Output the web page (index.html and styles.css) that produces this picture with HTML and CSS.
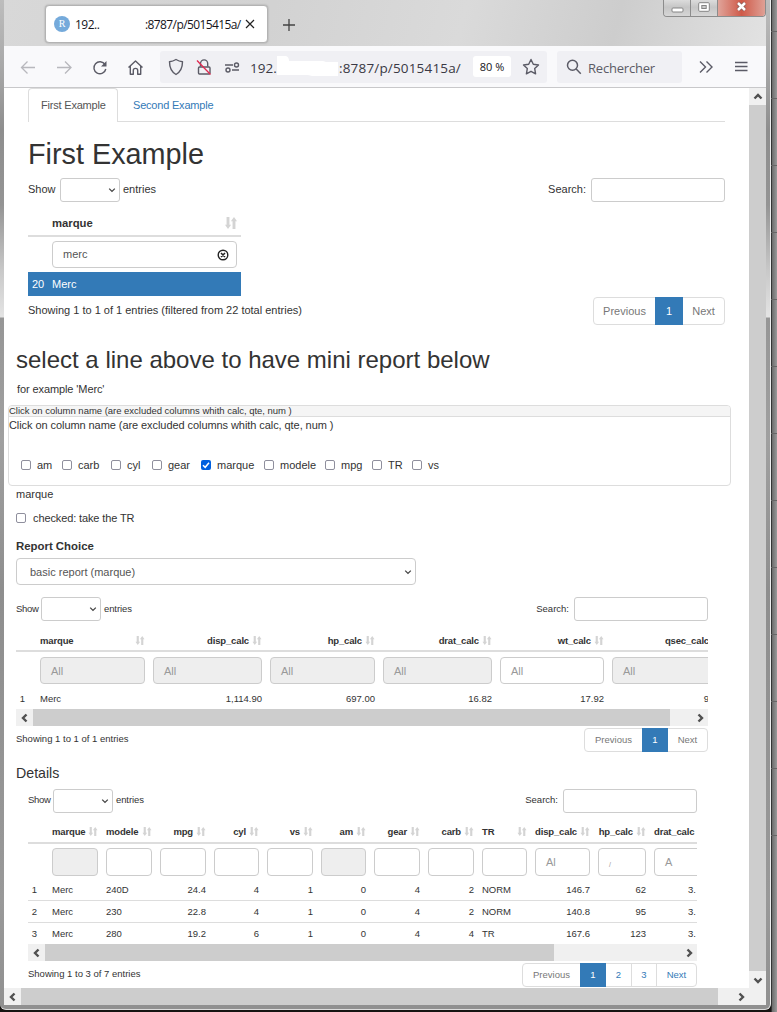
FILE: index.html
```html
<!DOCTYPE html>
<html lang="en">
<head>
<meta charset="utf-8">
<title>First Example</title>
<link rel="stylesheet" href="styles.css">
</head>
<body>
<svg class="defs" width="0" height="0">
  <symbol id="sort" viewBox="0 0 10 10"><path d="M1.300 0h2.400v6.500H5.100L2.500 10 0 6.500h1.300zM6.300 10h2.400V3.500H10L7.500 0 4.900 3.500h1.400z" fill="#d4d4d4"/></symbol>
  <symbol id="chev" viewBox="0 0 8 8"><path d="M1.2 2.6 4 5.4l2.8-2.8" fill="none" stroke="#444" stroke-width="1.3"/></symbol>
  <symbol id="left" viewBox="0 0 10 10"><path d="M6.500 1.500 3 5l3.500 3.500" fill="none" stroke="#505050" stroke-width="2.4"/></symbol>
  <symbol id="right" viewBox="0 0 10 10"><path d="M3.500 1.500 7 5 3.500 8.500" fill="none" stroke="#505050" stroke-width="2.4"/></symbol>
</svg>
<div class="desktop">
<div class="frame">
<div class="window">
  <div class="titlebar">
    <div class="browser-tab">
      <span class="favicon">R</span>
      <span class="tab-ip">192..</span>
      <span class="tab-url">:8787/p/5015415a/</span>
      <svg width="10" height="10" viewBox="0 0 10 10"><path d="m1 1 8 8M9 1 1 9" stroke="#222" stroke-width="1.2"/></svg>
    </div>
    <svg class="plus" width="12" height="12" viewBox="0 0 12 12"><path d="M6 0v12M0 6h12" stroke="#444" stroke-width="1.3"/></svg>
    <div class="controls">
      <span class="ctl"><svg width="13" height="6" viewBox="0 0 13 6"><rect x="1" y="1" width="11" height="4" rx="1" fill="#fff" stroke="#858585"/></svg></span>
      <span class="ctl mid"><svg width="12" height="10" viewBox="0 0 12 10"><rect x=".7" y=".7" width="10.6" height="8.6" rx="1" fill="#fff" stroke="#858585"/><rect x="3.8" y="3.5" width="4.4" height="3" fill="#ccc" stroke="#858585"/></svg></span>
      <span class="ctl close"><svg width="13" height="11" viewBox="0 0 13 11"><path d="m3 2 7 7m0-7L3 9" stroke="#8d5e5b" stroke-width="4.2"/><path d="m3 2 7 7m0-7L3 9" stroke="#fff" stroke-width="2.5"/></svg></span>
    </div>
  </div>
  <div class="toolbar">
    <svg class="nav" width="150" height="40" viewBox="4 47 150 40" fill="none" stroke="#5b5b66" stroke-width="1.4">
      <path d="M35 67.500H21.500m6-6-6 6 6 6M57 67.500h14m-6-6 6 6-6 6" stroke="#b8b8bd" stroke-width="1.300"/>
      <path d="M105 64.500a6 6 0 1 0 .8 4.500"/><path d="M106.500 61v5.500H101z" fill="#5b5b66" stroke="none"/>
      <path d="m128.500 67.500 7-6.500 7 6.500M130.300 66v8.300h3V70.500c0-2.800 4.400-2.800 4.400 0v3.800h3V66" stroke-linejoin="round"/>
    </svg>
    <div class="address">
      <svg class="shields" width="90" height="32" viewBox="160 51 90 32" fill="none" stroke="#5b5b66" stroke-width="1.400">
        <path d="M176 59.500c2.500 1.500 4.500 2 6.500 2.200 0 6-1.800 10-6.500 12.800-4.700-2.800-6.500-6.800-6.500-12.800 2-.2 4-.7 6.500-2.200z" stroke-linejoin="round"/>
        <rect x="198.500" y="67" width="11.500" height="7" rx="1"/><path d="M200.500 66.500v-3a3.600 3.600 0 0 1 7.200 0v3"/>
        <path d="m197 60.500 13.500 14" stroke="#e22850" stroke-width="1.300"/>
        <path d="M225 65h8M232 70h7"/><circle cx="236.500" cy="65" r="2"/><circle cx="228" cy="70" r="2"/>
      </svg>
      <span class="ip">192.</span>
      <svg class="smudge" width="62" height="24" viewBox="277 55 62 24"><path d="M277 56h9q3 1 3 5h34l3 1h12v14h-26l-4-1h-31z" fill="#fff"/></svg>
      <span class="url">:8787/p/5015415a/</span>
      <span class="zoom">80 %</span>
      <svg class="star" width="18" height="18" viewBox="0 0 18 18"><path d="m9 1.500 2.300 4.800 5.200.7-3.800 3.600.9 5.200L9 13.300l-4.600 2.500.9-5.200L1.500 7l5.200-.7z" fill="none" stroke="#5b5b66" stroke-width="1.400" stroke-linejoin="round"/></svg>
    </div>
    <div class="searchbox">
      <svg width="16" height="16" viewBox="0 0 16 16" fill="none" stroke="#5b5b66" stroke-width="1.500"><circle cx="6.500" cy="6.200" r="5"/><path d="m10.200 9.900 4.600 4.800"/></svg>
      <span class="rech">Rechercher</span>
    </div>
    <svg class="more" width="14" height="14" viewBox="0 0 14 14" fill="none" stroke="#5b5b66" stroke-width="1.400"><path d="m1 1.500 5.500 5.500L1 12.500M7.500 1.500 13 7l-5.500 5.500"/></svg>
    <svg class="burger" width="13" height="11" viewBox="0 0 13 11" stroke="#5b5b66" stroke-width="1.400"><path d="M0 1.500h12.500M0 5.500h12.500M0 9.500h12.500"/></svg>
  </div>
  <div class="viewport">
    <main class="page">
      <nav class="tabs"><span class="tab active"><span class="t-first">First Example</span></span><span class="tab link"><span class="t-second">Second Example</span></span></nav>
      <h1 class="title"><span>First Example</span></h1>
      <div class="controls-row first">
        <span class="show">Show</span><span class="select"><svg width="8" height="8"><use href="#chev"/></svg></span><span class="entries">entries</span>
        <span class="search-label">Search:</span><span class="search"></span>
      </div>
      <div class="grid t0">
        <div class="head"><span></span><span class="th text"><b>marque</b><svg width="12" height="12" viewBox="0 0 10 10"><use href="#sort"/></svg></span></div>
        <div class="filters"><span></span><span class="inp"><span class="val">merc</span><svg class="clear" width="12" height="12" viewBox="0 0 12 12" fill="none" stroke="#222"><circle cx="6" cy="6" r="4.800" stroke-width="1.400"/><path d="m4 4 4 4m0-4L4 8" stroke-width="1.500"/></svg></span></div>
        <div class="row selected"><span class="n">20</span><span class="l">Merc</span></div>
      </div>
      <div class="foot f0"><span class="info"><span class="i0">Showing 1 to 1 of 1 entries (filtered from 22 total entries)</span></span>
        <span class="pager"><span class="p prev">Previous</span><span class="p on">1</span><span class="p next">Next</span></span></div>
      <h2 class="subtitle"><span>select a line above to have mini report below</span></h2>
      <p class="example">for example 'Merc'</p>
      <section class="panel">
        <div class="panel-head"><span>Click on column name (are excluded columns whith calc, qte, num )</span></div>
        <div class="panel-text"><span>Click on column name (are excluded columns whith calc, qte, num )</span></div>
        <div class="checks">
          <label class="c1"><i class="box"></i>am</label><label class="c2"><i class="box"></i>carb</label><label class="c3"><i class="box"></i>cyl</label><label class="c4"><i class="box"></i>gear</label><label class="c5"><i class="box checked"><svg width="10" height="10" viewBox="0 0 10 10"><path d="m2 5.200 2.200 2.100L8 2.800" fill="none" stroke="#fff" stroke-width="1.500"/></svg></i>marque</label><label class="c6"><i class="box"></i>modele</label><label class="c7"><i class="box"></i>mpg</label><label class="c8"><i class="box"></i>TR</label><label><i class="box"></i>vs</label>
        </div>
      </section>
      <p class="chosen">marque</p>
      <label class="take"><i class="box"></i><span>checked: take the TR</span></label>
      <p class="report-label">Report Choice</p>
      <div class="report-select"><span>basic report (marque)</span><svg width="8" height="8"><use href="#chev"/></svg></div>
      <section class="small report">
        <div class="controls-row">
          <span class="show">Show</span><span class="select"><svg width="8" height="8"><use href="#chev"/></svg></span><span class="entries">entries</span>
          <span class="search-label">Search:</span><span class="search"></span>
        </div>
        <div class="grid t1">
          <div class="head"><span></span><span class="th text"><b>marque</b><svg width="10" height="9"><use href="#sort"/></svg></span><span class="th"><b>disp_calc</b><svg width="10" height="9"><use href="#sort"/></svg></span><span class="th"><b>hp_calc</b><svg width="10" height="9"><use href="#sort"/></svg></span><span class="th"><b>drat_calc</b><svg width="10" height="9"><use href="#sort"/></svg></span><span class="th"><b>wt_calc</b><svg width="10" height="9"><use href="#sort"/></svg></span><span class="th last"><b>qsec_calc</b></span></div>
          <div class="filters"><span></span><span class="inp off">All</span><span class="inp off">All</span><span class="inp off">All</span><span class="inp off">All</span><span class="inp">All</span><span class="inp off">All</span></div>
          <div class="row"><span class="n">1</span><span class="l">Merc</span><span>1,114.90</span><span>697.00</span><span>16.82</span><span>17.92</span><span class="cut">9</span></div>
        </div>
        <div class="hbar"><span class="arrow"><svg width="10" height="10"><use href="#left"/></svg></span><span class="thumb"></span><span class="arrow"><svg width="10" height="10"><use href="#right"/></svg></span></div>
        <div class="foot"><span class="info">Showing 1 to 1 of 1 entries</span>
          <span class="pager"><span class="p prev">Previous</span><span class="p on">1</span><span class="p next">Next</span></span></div>
      </section>
      <h3 class="details-title">Details</h3>
      <section class="small details">
        <div class="controls-row">
          <span class="show">Show</span><span class="select"><svg width="8" height="8"><use href="#chev"/></svg></span><span class="entries">entries</span>
          <span class="search-label">Search:</span><span class="search"></span>
        </div>
        <div class="grid t2">
          <div class="head"><span></span><span class="th text"><b>marque</b><svg width="10" height="9"><use href="#sort"/></svg></span><span class="th text"><b>modele</b><svg width="10" height="9"><use href="#sort"/></svg></span><span class="th"><b>mpg</b><svg width="10" height="9"><use href="#sort"/></svg></span><span class="th"><b>cyl</b><svg width="10" height="9"><use href="#sort"/></svg></span><span class="th"><b>vs</b><svg width="10" height="9"><use href="#sort"/></svg></span><span class="th"><b>am</b><svg width="10" height="9"><use href="#sort"/></svg></span><span class="th"><b>gear</b><svg width="10" height="9"><use href="#sort"/></svg></span><span class="th"><b>carb</b><svg width="10" height="9"><use href="#sort"/></svg></span><span class="th text"><b>TR</b><svg width="10" height="9"><use href="#sort"/></svg></span><span class="th"><b>disp_calc</b><svg width="10" height="9"><use href="#sort"/></svg></span><span class="th"><b>hp_calc</b><svg width="10" height="9"><use href="#sort"/></svg></span><span class="th text"><b>drat_calc</b></span></div>
          <div class="filters"><span></span><span class="inp off"></span><span class="inp"></span><span class="inp"></span><span class="inp"></span><span class="inp"></span><span class="inp off"></span><span class="inp"></span><span class="inp"></span><span class="inp"></span><span class="inp">Al</span><span class="inp narrow">/</span><span class="inp open">A</span></div>
          <div class="row"><span class="n">1</span><span class="l">Merc</span><span class="l">240D</span><span>24.4</span><span>4</span><span>1</span><span>0</span><span>4</span><span>2</span><span class="l">NORM</span><span>146.7</span><span>62</span><span>3.</span></div>
          <div class="row"><span class="n">2</span><span class="l">Merc</span><span class="l">230</span><span>22.8</span><span>4</span><span>1</span><span>0</span><span>4</span><span>2</span><span class="l">NORM</span><span>140.8</span><span>95</span><span>3.</span></div>
          <div class="row"><span class="n">3</span><span class="l">Merc</span><span class="l">280</span><span>19.2</span><span>6</span><span>1</span><span>0</span><span>4</span><span>4</span><span class="l">TR</span><span>167.6</span><span>123</span><span>3.</span></div>
        </div>
        <div class="hbar"><span class="arrow"><svg width="10" height="10"><use href="#left"/></svg></span><span class="thumb"></span><span class="arrow"><svg width="10" height="10"><use href="#right"/></svg></span></div>
        <div class="foot"><span class="info">Showing 1 to 3 of 7 entries</span>
          <span class="pager"><span class="p prev">Previous</span><span class="p on">1</span><span class="p go">2</span><span class="p go">3</span><span class="p go next">Next</span></span></div>
      </section>
    </main>
    <div class="vbar"><span class="varrow"><svg class="up" width="10" height="10"><use href="#left"/></svg></span><span class="vthumb"></span><span class="varrow"><svg class="down" width="10" height="10"><use href="#left"/></svg></span></div>
  </div>
  <div class="hbar window-bar"><span class="arrow"><svg width="10" height="10"><use href="#left"/></svg></span><span class="thumb"></span><span class="arrow"><svg width="10" height="10"><use href="#right"/></svg></span><span class="corner"></span></div>
</div>
</div>
<div class="backdrop"><i></i><i></i><i></i><i></i><i></i><i></i><i></i><i></i><i></i><i></i><i></i><i></i><i></i></div>
</div>
</body>
</html>
```

FILE: styles.css
```css
* { box-sizing: border-box; }
body { margin: 0; font: 11px "Liberation Sans", Arial, sans-serif; color: #333; }
h1, h2, h3, p { margin: 0; font-weight: 400; }
svg { flex: none; display: block; }
.defs { display: none; }
.desktop { width: 777px; height: 1012px; display: flex; background: #171412; overflow: hidden; }
.frame { width: 771px; height: 1010px; padding: 0 4px 4px; border-right: 1px solid #eee; border-bottom: 1px solid #ddd; border-radius: 0 0 6px 6px;
  background: linear-gradient(#bdbdbd, #a9a9a9 65px, #8e8e8e 130px, #949494 205px, #c8c8c8 270px, #e4e4e4 317px, #969696 318px, #a0a0a0 440px, #8e8e8e 590px, #999 900px, #909090); }
.window { width: 762px; height: 1005px; display: flex; flex-direction: column; background: #fff; }

.titlebar { height: 46px; flex: none; display: flex; align-items: flex-start; background: linear-gradient(105deg, #d8d8d8, #d2d2d2 35%, #dadada 60%, #cdcdcd 80%, #e2e2e2); }
.browser-tab { width: 223px; height: 38px; margin: 5px 0 0 41px; padding: 0 9px 0 8px; display: flex; align-items: center; background: #fff; border: 1px solid #b3b3b3; border-radius: 4px; box-shadow: 0 0 2px #999; font: 12px "Open Sans", sans-serif; color: #15141a; }
.favicon { width: 16px; height: 16px; border-radius: 50%; background: #75aadb; color: #fff; font: 10px/16px "Liberation Serif", serif; text-align: center; }
.tab-ip { width: 75px; padding-left: 5px; letter-spacing: -.5px; }
.tab-url { width: 101px; letter-spacing: -.6px; white-space: nowrap; }
.browser-tab svg { margin-left: -1px; }
.plus { margin: 19px 0 0 15px; }
.controls { width: 103px; height: 17px; margin-left: auto; display: flex; border: 1px solid #8c8c8c; border-top: 0; border-radius: 0 0 4px 4px; overflow: hidden; }
.ctl { flex: 1; display: flex; align-items: center; justify-content: center; background: linear-gradient(#dcdcdc, #c6c6c6 45%, #d6d6d6); border-right: 1px solid #8c8c8c; padding-bottom: 3px; }
.ctl:first-child { padding: 4px 0 0; }
.ctl.close { flex: 0 0 47px; border: 0; background: linear-gradient(90deg, #e0a49a, #cf5a49 50%, #dfa095); }

.toolbar { height: 42px; flex: none; display: flex; align-items: center; background: #f9f9fb; border-bottom: 1px solid #c8c8ca; }
.nav { margin-right: 6px; }
.address { width: 387px; height: 32px; display: flex; align-items: center; background: #f0f0f4; border-radius: 3px; font: 13.5px "Open Sans", sans-serif; color: #3a3944; }
.address .ip, .address .url, .rech { padding-top: 2px; }
.ip { width: 27px; }
.url { width: 134px; white-space: nowrap; letter-spacing: .17px; }
.zoom { width: 38px; height: 21px; line-height: 21px; text-align: center; background: #fff; border-radius: 3px; font-size: 11px; color: #15141a; }
.star { margin-left: 11px; }
.searchbox { width: 125px; height: 32px; margin-left: 10px; padding-left: 9px; display: flex; gap: 6px; align-items: center; background: #f0f0f4; border-radius: 3px; font: 13px "Open Sans", sans-serif; letter-spacing: -.2px; color: #5b5b66; }
.more { margin-left: 17px; }
.burger { margin-left: 22px; }

.viewport { flex: 1; min-height: 0; display: flex; }
.page { width: 745px; height: 900px; overflow: hidden; }
.vbar { width: 17px; display: flex; flex-direction: column; background: #f0f0f0; }
.varrow { height: 17px; display: flex; align-items: center; justify-content: center; }
.vthumb { flex: 1; background: #cdcdcd; }
.up { transform: rotate(90deg); }
.down { transform: rotate(-90deg); }
.hbar { height: 17px; display: flex; background: #f0f0f0; }
.arrow { width: 17px; display: flex; align-items: center; justify-content: center; }
.hbar .thumb { background: #cdcdcd; margin-right: auto; }
.window-bar { flex: none; }
.window-bar .thumb { width: 697px; }
.corner { width: 17px; }

.tabs { height: 34px; margin: 0 24px; display: flex; border-bottom: 1px solid #ddd; letter-spacing: -.2px; }
.tab { height: 34px; padding: 0 13px; line-height: 34px; }
.tab.active { width: 90px; border: 1px solid #ddd; border-bottom: 0; border-radius: 4px 4px 0 0; background: #fff; padding: 0 12px; line-height: 33px; color: #555; white-space: nowrap; }
.tab.link { padding-left: 15px; color: #337ab7; }
.title { height: 56px; padding: 14px 0 0 24px; font-size: 28.8px; line-height: 36px; }
.controls-row { height: 24px; display: flex; line-height: 23px; }
.first { margin: 0 24px; }
.select { width: 60px; height: 24px; border: 1px solid #ccc; border-radius: 3px; display: flex; justify-content: flex-end; align-items: center; padding-right: 3px; }
.show { width: 32px; }
.entries { padding-left: 3px; }
.search-label { margin-left: auto; padding-right: 5px; }
.search { width: 134px; height: 24px; border: 1px solid #ccc; border-radius: 3px; }

.grid { overflow: hidden; }
.head, .filters, .row { display: grid; }
.head > *, .row > * { padding: 0 4px; text-align: right; white-space: nowrap; }
.th { display: flex; justify-content: flex-end; align-items: center; gap: 3px; }
.head .text { justify-content: space-between; }
.head { border-bottom: 2px solid #ddd; }
.t0 .head { font-size: 11.3px; }
.row .l { text-align: left; }
.inp { margin: 0 4px; border: 1px solid #ccc; border-radius: 4px; padding-left: 10px; color: #999; display: flex; align-items: center; font-size: 11px; }
.off { background: #eee; }
.t0 { width: 213px; margin: 9px 0 0 24px; }
.t0 .head, .t0 .filters, .t0 .row { grid-template-columns: 20px 193px; }
.t0 .head { height: 26px; }
.t0 .filters { height: 35px; padding: 4px 0; }
.t0 .inp { color: #555; justify-content: space-between; padding-right: 7px; }
.val { margin-top: -2px; }
.selected { height: 24px; line-height: 24px; background: #337ab7; color: #fff; }
.foot { display: flex; justify-content: space-between; }
.f0 { height: 29px; margin: 1px 24px 0; line-height: 27px; }
.pager { height: 28px; display: flex; border: 1px solid #ddd; border-radius: 4px; color: #777; line-height: 26px; text-align: center; }
.p.prev { width: 61px; }
.p.on { width: 28px; margin: -1px 0; padding: 1px 0; background: #337ab7; color: #fff; }
.p.next { width: 41px; }
.subtitle { height: 36px; margin-top: 16px; padding-left: 12px; font-size: 24px; line-height: 36px; white-space: nowrap; }
.example { height: 24px; line-height: 22px; padding-left: 13px; letter-spacing: -.1px; }
.panel { width: 723px; height: 81px; margin: 3px 0 0 4px; border: 1px solid #ddd; border-radius: 4px; overflow: hidden; }
.panel-head { height: 11px; border-bottom: 1px solid #ddd; background: #f5f5f5; font-size: 9.5px; letter-spacing: -.02px; line-height: 10px; }
.panel-text { height: 17px; line-height: 17px; letter-spacing: -.07px; }
.checks { height: 12px; margin-top: 25px; padding-left: 12px; display: flex; line-height: 12px; }
.checks label { display: flex; align-items: center; gap: 6px; }
.box { width: 10px; height: 10px; border: 1px solid #8f8f9d; border-radius: 2px; background: #fff; display: block; flex: none; }
.checked { border: 0; background: #0060df; }
.c1 { width: 41px; } .c2 { width: 49px; } .c3 { width: 41px; } .c4 { width: 49px; } .c5 { width: 63px; } .c6 { width: 61px; } .c7 { width: 47px; } .c8 { width: 40px; }
.chosen { height: 18px; line-height: 17px; padding-left: 12px; }
.take { height: 28px; padding-left: 12px; display: flex; align-items: center; gap: 7px; letter-spacing: -.12px; }
.report-label { height: 26px; line-height: 28px; padding-left: 12px; font-size: 11.4px; font-weight: 700; }
.report-select { width: 400px; height: 27px; margin-left: 12px; padding: 0 3px 0 13px; border: 1px solid #ccc; border-radius: 4px; color: #555; display: flex; align-items: center; justify-content: space-between; }

.small { font-size: 9.5px; }
.small .head b { letter-spacing: -.15px; }
.small .show { width: 25px; letter-spacing: -.3px; }
.small .entries { padding-left: 3px; letter-spacing: -.1px; }
.small .pager { height: 24px; line-height: 22px; }
.small .p.prev { width: 57px; }
.small .p.on { width: 26px; }
.small .p.next { width: 39px; }
.small .p.go { color: #337ab7; width: 25px; }
.small .p.go + .go { border-left: 1px solid #ddd; }
.small .p.go.next { width: 40px; }
.report { width: 692px; margin: 12px 0 0 12px; }
.t1 { margin-top: 9px; }
.t1 .head, .t1 .filters, .t1 .row { grid-template-columns: 20px 113px 117px 113px 117px 112px 117px; }
.t1 .head { height: 22px; }
.t1 .head .last { padding-right: 16px; }
.t1 .filters { height: 37px; padding: 5px 0; }
.t1 .row { height: 20px; line-height: 20px; }
.row > .n { text-align: center; padding: 0; margin-left: -7px; }
.t0 .row > .n { margin: 0; }
.report .thumb { width: 637px; }
.report .foot { margin-top: 2px; height: 24px; line-height: 22px; }
.row > .cut { padding-right: 16px; }
.details-title { height: 37px; padding-left: 12px; line-height: 42px; font-size: 14.2px; }
.details { width: 669px; margin-left: 24px; }
.details .controls-row { line-height: 22px; }
.t2 { margin-top: 8px; }
.t2 .head, .t2 .filters, .t2 .row { grid-template-columns: 20px 54px 54px 54px 53px 54px 53px 54px 54px 53px 63px 56px 66px; }
.t2 .head { height: 23px; }
.t2 .filters { height: 34px; padding: 4px 0 2px; }
.t2 .row { height: 22px; line-height: 23px; }
.t2 .row + .row { border-top: 1px solid #ddd; line-height: 22px; }
.t2 .row > :last-child { padding-right: 20px; }
.t2 .narrow { font-size: 7px; padding-top: 4px; }
.t2 .open { margin-right: -8px; }
.details .thumb { width: 509px; }
.details .foot { margin-top: 2px; height: 24px; line-height: 22px; }

.backdrop { flex: 1; display: flex; flex-direction: column; gap: 66px; padding-top: 31px; background: linear-gradient(90deg, #171717, #707070 25%, #9a9a9a); }
.backdrop i { height: 1px; flex: none; background: #666; }
```
